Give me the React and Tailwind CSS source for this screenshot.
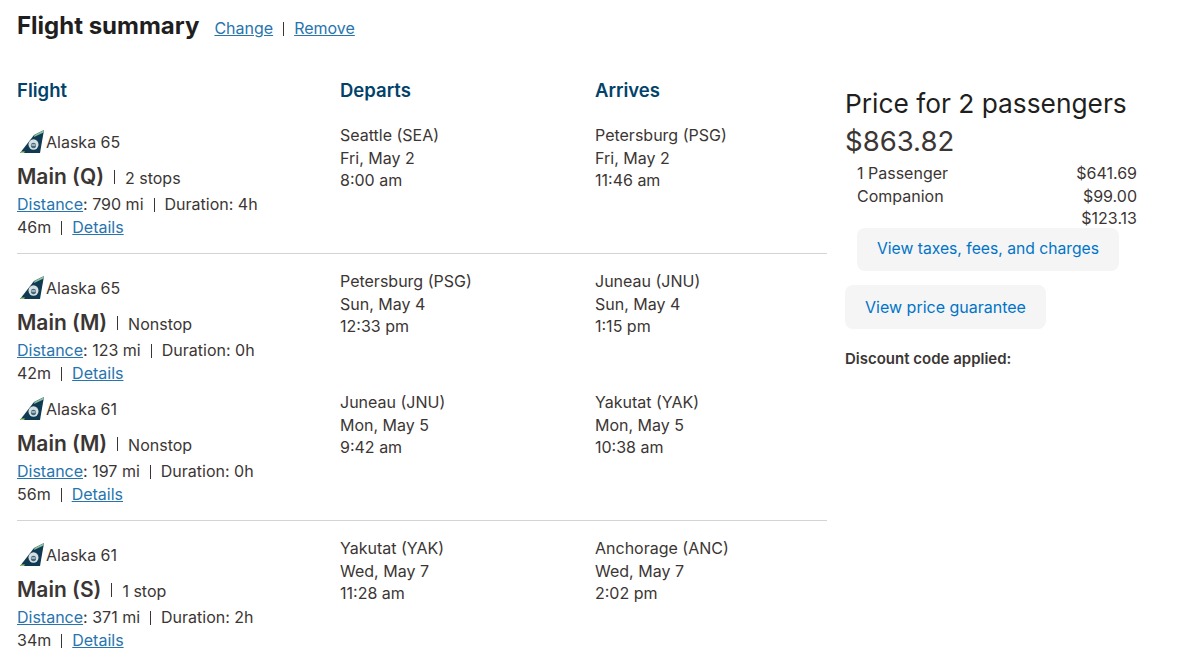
const font = { fontFamily: '"Inter", "Liberation Sans", sans-serif' };

const legs = [
  { flight: "Alaska 65", cabin: "Main (Q)", stops: "2 stops", distance: "790 mi", duration: "4h", rest: "46m", from: "Seattle (SEA)", depDate: "Fri, May 2", depTime: "8:00 am", to: "Petersburg (PSG)", arrDate: "Fri, May 2", arrTime: "11:46 am", box: "h-[130px] border-b border-[#d4d4d4]" },
  { flight: "Alaska 65", cabin: "Main (M)", stops: "Nonstop", distance: "123 mi", duration: "0h", rest: "42m", from: "Petersburg (PSG)", depDate: "Sun, May 4", depTime: "12:33 pm", to: "Juneau (JNU)", arrDate: "Sun, May 4", arrTime: "1:15 pm", box: "mt-[16px] h-[121px]" },
  { flight: "Alaska 61", cabin: "Main (M)", stops: "Nonstop", distance: "197 mi", duration: "0h", rest: "56m", from: "Juneau (JNU)", depDate: "Mon, May 5", depTime: "9:42 am", to: "Yakutat (YAK)", arrDate: "Mon, May 5", arrTime: "10:38 am", box: "h-[130px] border-b border-[#d4d4d4]" },
  { flight: "Alaska 61", cabin: "Main (S)", stops: "1 stop", distance: "371 mi", duration: "2h", rest: "34m", from: "Yakutat (YAK)", depDate: "Wed, May 7", depTime: "11:28 am", to: "Anchorage (ANC)", arrDate: "Wed, May 7", arrTime: "2:02 pm", box: "mt-[16px] h-[121px]" },
];

const TailLogo = () => (
  <svg width="24" height="24" viewBox="0 0 24 24" className="shrink-0">
    <polygon points="0,23 14,5 24,0 20,23" fill="#0f3a52" />
    <polygon points="14.5,5 24,0 23.6,2.4 14,7" fill="#8cc0a0" />
    <polygon points="0,23 4,23 5,21.6 1.2,21.6" fill="#9cc86a" />
    <ellipse cx="13.5" cy="14.5" rx="5" ry="5.2" fill="#d5e0e3" />
    <ellipse cx="13.5" cy="15.5" rx="2.6" ry="2.8" fill="#48697a" />
    <rect x="11.5" y="14.5" width="4" height="1" fill="#f2f5f6" />
  </svg>
);

const Sep = () => (
  <span className="inline-block w-[1px] h-[14px] align-[-2px] bg-[#3b3634] mx-[10px]" />
);

const Leg = ({ leg }) => (
  <div className={`grid grid-cols-[323px_255px_232px] ${leg.box}`}>
    <div className="pr-[70px]">
      <div className="flex items-center h-[24px] mt-[6px] pl-[3px] gap-[2px] text-[16px]">
        <TailLogo />
        <span>{leg.flight}</span>
      </div>
      <div className="flex items-baseline mt-[7px] h-[24px]">
        <span className="text-[21px] font-semibold">{leg.cabin}</span>
        <Sep />
        <span className="text-[16px]">{leg.stops}</span>
      </div>
      <div className="mt-[8px] text-[16px] leading-[22.5px]">
        <a className="text-[#2774ae] underline">Distance</a>: {leg.distance}<Sep />Duration: {leg.duration} {leg.rest}<Sep />
        <a className="text-[#2774ae] underline">Details</a>
      </div>
    </div>
    <div className="text-[16px] leading-[22.5px]">
      <div>{leg.from}</div>
      <div>{leg.depDate}</div>
      <div>{leg.depTime}</div>
    </div>
    <div className="text-[16px] leading-[22.5px]">
      <div>{leg.to}</div>
      <div>{leg.arrDate}</div>
      <div>{leg.arrTime}</div>
    </div>
  </div>
);

export default function App() {
  return (
    <div style={font} className="w-[1177px] h-[663px] overflow-hidden bg-white text-[#3b3634] pl-[17px]">
      <div className="flex items-baseline pt-[8px] h-[77px]">
        <h1 className="text-[24px] font-bold text-[#1f1f1f]">Flight summary</h1>
        <div className="ml-[15px] text-[16px]">
          <a className="text-[#2774ae] underline">Change</a>
          <Sep />
          <a className="text-[#2774ae] underline">Remove</a>
        </div>
      </div>
      <div className="flex">
        <div className="w-[810px]">
          <div className="grid grid-cols-[323px_255px_232px] text-[18.5px] font-semibold text-[#01426a] h-[47px]">
            <div>Flight</div>
            <div>Departs</div>
            <div>Arrives</div>
          </div>
          {legs.map((leg, i) => <Leg key={i} leg={leg} />)}
        </div>
        <div className="ml-[18px] w-[292px] pt-[9px]">
          <div className="text-[26.3px] leading-[36px] text-[#1f1f1f]">Price for 2 passengers</div>
          <div className="text-[27.5px] leading-[38px]">$863.82</div>
          <div className="pl-[12px] w-[292px] text-[16px] leading-[22.5px] mt-[2px]">
            <div className="flex justify-between"><span>1 Passenger</span><span>$641.69</span></div>
            <div className="flex justify-between"><span>Companion</span><span>$99.00</span></div>
            <div className="text-right">$123.13</div>
          </div>
          <div className="pl-[12px] -mt-[2px]">
            <button className="w-[262px] h-[43px] rounded-lg bg-[#f5f5f5] text-[#0074c8] text-[15.7px]">View taxes, fees, and charges</button>
          </div>
          <button className="block mt-[14px] w-[201px] h-[44px] rounded-lg bg-[#f5f5f5] text-[#0074c8] text-[16px]">View price guarantee</button>
          <div className="mt-[19px] text-[15px] font-semibold">Discount code applied:</div>
        </div>
      </div>
    </div>
  );
}
